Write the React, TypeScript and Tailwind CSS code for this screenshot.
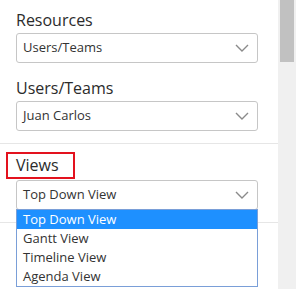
type Field = { label: string; value: string };

const fields: Field[] = [
  { label: "Resources", value: "Users/Teams" },
  { label: "Users/Teams", value: "Juan Carlos" },
];

const views = ["Top Down View", "Gantt View", "Timeline View", "Agenda View"];

function Chevron() {
  return (
    <svg width="14" height="8" viewBox="0 0 14 8" fill="none">
      <polyline points="1,1 7,7 13,1" stroke="#8a8a8a" strokeWidth="1.4" />
    </svg>
  );
}

function SelectBox({ value }: { value: string }) {
  return (
    <div className="flex h-[30px] items-center justify-between rounded-[3px] border border-[#c6c6c6] bg-white pl-[6px] pr-[8px] text-[13px] text-[#333]">
      <span>{value}</span>
      <Chevron />
    </div>
  );
}

export default function App() {
  return (
    <div
      className="flex h-[289px] w-[297px] overflow-hidden bg-white"
      style={{ fontFamily: '"Open Sans", sans-serif' }}
    >
      <div className="relative w-[278px] shrink-0">
        <div className="pl-4 pr-5 pt-[9px]">
          {fields.map((f, i) => (
            <div key={f.label} className={i === 0 ? "mb-[14px]" : "mb-[12px]"}>
              <div className="mb-[2px] text-[16px] leading-[22px] text-[#2b2b2b]">{f.label}</div>
              <SelectBox value={f.value} />
            </div>
          ))}
        </div>
        <div className="h-px bg-[#e6e6e6]" />

        <div className="pl-4 pr-5 pt-[10px]">
          <div className="relative mb-[4px] text-[16px] leading-[22px] text-[#2b2b2b]">
            Views
            <div className="absolute left-[-10px] top-[-2px] h-[27px] w-[69px] border-2 border-[#e3121e]" />
          </div>
          <SelectBox value="Top Down View" />
        </div>
        <div className="mt-[12px] h-px bg-[#e6e6e6]" />

        {/* open dropdown list */}
        <div className="absolute left-4 top-[209px] w-[242px] border border-[#7a9fd8] bg-white text-[13px] text-[#333]">
          {views.map((v, i) => (
            <div
              key={v}
              className={`h-[19px] pl-[6px] leading-[19px] ${
                i === 0 ? "bg-[#1e90ff] text-white" : ""
              }`}
            >
              {v}
            </div>
          ))}
        </div>
      </div>

      {/* scrollbar */}
      <div className="w-[18px] shrink-0 bg-[#f0f0f0] px-[2px]">
        <div className="h-[62px] bg-[#c1c1c1]" />
      </div>
      <div className="w-px bg-white" />
    </div>
  );
}
